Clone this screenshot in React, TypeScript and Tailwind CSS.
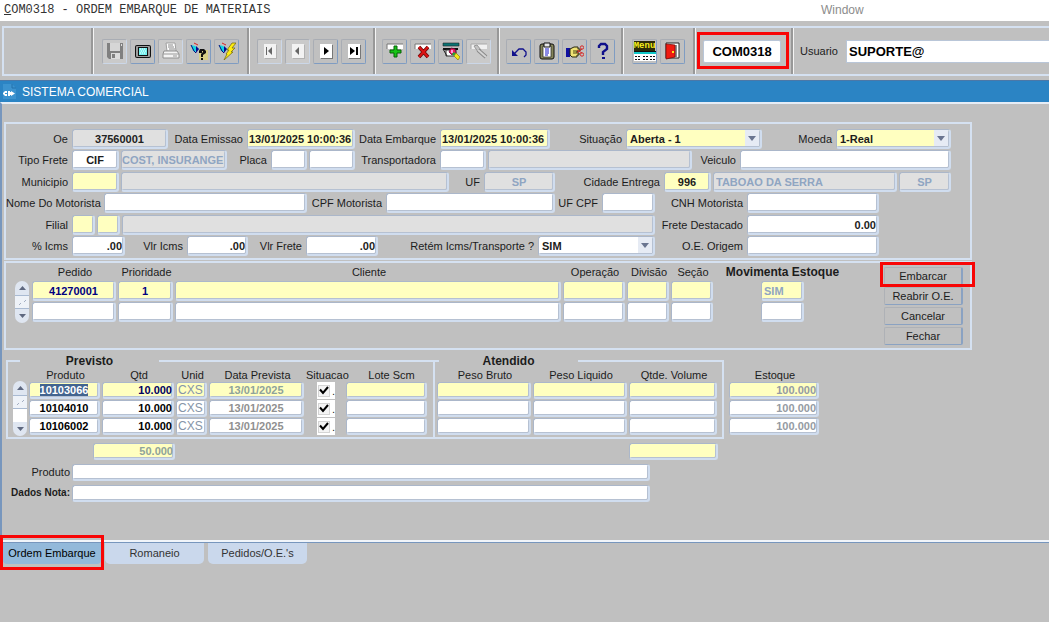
import React, { useEffect, useId, useRef } from "react";
import { clsx } from "clsx";

const fieldBase =
  "block h-5 min-w-0 rounded-[3px] border border-r-2 border-b-2 border-t-[#abb7ca] border-l-[#abb7ca] border-r-[#d0ddef] border-b-[#d0ddef] px-[3px] text-[11px] leading-4 font-bold outline-none shadow-[inset_-1px_-1px_0_0_#b6c1d2]";

type FieldProps = {
  label?: string;
  name?: string;
  labelClass?: string;
  className?: string;
  value?: string;
};

function Field({ label, name, labelClass, className, value = "" }: FieldProps) {
  const id = useId();
  return (
    <>
      {label && (
        <label
          htmlFor={id}
          className={clsx("shrink-0 pr-1 text-right text-[11px] leading-5 whitespace-nowrap", labelClass)}
        >
          {label}
        </label>
      )}
      <input id={id} aria-label={label ? undefined : name} defaultValue={value} className={clsx(fieldBase, className)} />
    </>
  );
}

function SelectField({ label, labelClass, className, boxClass, value }: FieldProps & { boxClass: string }) {
  const id = useId();
  return (
    <>
      <label
        htmlFor={id}
        className={clsx("shrink-0 pr-1 text-right text-[11px] leading-5 whitespace-nowrap", labelClass)}
      >
        {label}
      </label>
      <div className={clsx("relative", boxClass)}>
        <select id={id} defaultValue={value} className={clsx(fieldBase, "w-full appearance-none", className)}>
          <option>{value}</option>
        </select>
        <span className="pointer-events-none absolute top-px right-[3px] flex h-4 w-[14px] items-center justify-center bg-[#e6ebf4]">
          <svg width="8" height="5" viewBox="0 0 8 5" aria-hidden="true">
            <path d="M0 0h8L4 5z" fill="#6a7590" />
          </svg>
        </span>
      </div>
    </>
  );
}

function Cell({ name, value = "", className }: { name: string; value?: string; className?: string }) {
  return (
    <td className="p-0 pr-[2px] align-top">
      <input aria-label={name} defaultValue={value} className={clsx(fieldBase, "w-full", className)} />
    </td>
  );
}

function Scroller({ className, trackClass }: { className: string; trackClass: string }) {
  return (
    <div className={clsx("flex w-[14px] shrink-0 flex-col overflow-hidden rounded-full bg-[#dfe6f1]", className)}>
      <button type="button" aria-label="Registro anterior" className="flex h-[14px] shrink-0 items-center justify-center">
        <svg width="7" height="4" viewBox="0 0 7 4" aria-hidden="true">
          <path d="M0 4h7L3.500 0z" fill="#5e6880" />
        </svg>
      </button>
      <div className={clsx("flex-1", trackClass)}>
        <div className="flex h-[14px] items-center justify-center border-t border-b border-[#a9bad2] bg-[#eef2f8]">
          <svg width="9" height="7" viewBox="0 0 9 7" aria-hidden="true">
            <path d="M1 6l2-2M6 3l2-2" stroke="#a3aec2" />
          </svg>
        </div>
      </div>
      <button type="button" aria-label="Próximo registro" className="flex h-[14px] shrink-0 items-center justify-center">
        <svg width="7" height="4" viewBox="0 0 7 4" aria-hidden="true">
          <path d="M0 0h7L3.500 4z" fill="#5e6880" />
        </svg>
      </button>
    </div>
  );
}

const navTile = (
  <>
    <path d="M3 2h12v14H3z" fill="#fff" />
    <path d="M16 3v14H4v-1h11V3z" fill="#777" />
  </>
);
const navTileOff = (
  <>
    <path d="M3 2h12v14H3z" fill="#f2f2f2" />
    <path d="M16 3v14H4v-1h11V3z" fill="#b2b2b2" />
  </>
);
const flashlight = (
  <>
    <path d="M1 3l4 1 4 3-3 3-3-1z" fill="#12d4e4" />
    <path d="M6 4l3 3-3 4z" fill="#0b0b8c" />
    <path d="M1 3l3 6 2 2" stroke="#09097a" fill="none" />
    <path d="M4 1l4 2" stroke="#d22" />
  </>
);

const icons: Record<string, React.ReactNode> = {
  save: (
    <>
      <path d="M1 1h16v16H3l-2-2z" fill="#808080" />
      <path d="M4 1h10v8H4z" fill="#d6d6d6" />
      <path d="M5 11h9v6H5z" fill="#dcdcdc" />
      <path d="M6 12h3v4H6z" fill="#808080" />
      <path d="M15 2h1v2h-1z" fill="#ddd" />
    </>
  ),
  screen: (
    <>
      <rect x="1" y="3" width="16" height="13" rx="2" fill="#111" />
      <rect x="2" y="4" width="14" height="11" rx="1" fill="#9c9c9c" />
      <rect x="4" y="5" width="10" height="9" fill="#111" />
      <rect x="5" y="6" width="8" height="7" fill="#74f0ee" />
      <path d="M6 7h1M8 7h1M10 7h1M7 9h1M9 9h1M11 9h1M6 11h1M8 11h1M10 11h1" stroke="#fff" />
    </>
  ),
  print: (
    <>
      <path d="M4 1h9l1 8H5z" fill="#fff" stroke="#a0a0a0" />
      <path d="M6 3h5M6 5h6M7 7h6" stroke="#888" />
      <path d="M2 9h13l2 3v4H1v-4z" fill="#f4f4f4" stroke="#8f8f8f" />
      <path d="M1 12h16M11 14h4" stroke="#999" />
    </>
  ),
  queryEnter: (
    <>
      {flashlight}
      <path d="M9 8h9v10H9z" fill="#d6cf86" />
      <path d="M9 11V9l1-2h4l2 2v2l-3 2v2h-2v-3l2-2V9h-1v2zM11 16h2v2h-2z" fill="#111" />
    </>
  ),
  queryRun: (
    <>
      {flashlight}
      <path d="M14 1h4l-4 5h3l-4 4h2l-9 8 3-6H8l3-4H9l5-7z" fill="#ffee10" stroke="#7a6e10" strokeWidth=".8" />
    </>
  ),
  first: (
    <>
      {navTileOff}
      <path d="M5 5h1v8H5zM11 5v8L7 9z" fill="#666" />
    </>
  ),
  prev: (
    <>
      {navTileOff}
      <path d="M10 5v8L6 9z" fill="#666" />
    </>
  ),
  next: (
    <>
      {navTile}
      <path d="M7 5v8l5-4z" fill="#000" />
    </>
  ),
  last: (
    <>
      {navTile}
      <path d="M5 5v8l5-4zM11 5h2v8h-2z" fill="#000" />
    </>
  ),
  add: (
    <>
      <path d="M1 2h16v5H1z" fill="#fff" />
      <path d="M1 7V2h16" stroke="#777" fill="none" />
      <path d="M8 4h3v4h4v3h-4v4H8v-4H4V8h4z" fill="#16c416" stroke="#066006" />
    </>
  ),
  remove: (
    <>
      <path d="M1 2h16v5H1z" fill="#fff" />
      <path d="M1 7V2h16" stroke="#777" fill="none" />
      <path d="M5 5l9 10M14 5L5 15" stroke="#6c0808" strokeWidth="3.600" />
      <path d="M5 5l9 10M14 5L5 15" stroke="#dc1414" strokeWidth="2" />
    </>
  ),
  lock: (
    <>
      <path d="M1 1h16v3H1z" fill="#0b7474" stroke="#222" strokeWidth=".6" />
      <path d="M1 6h15v2H1z" fill="#111" />
      <path d="M4 8h10v6H4z" fill="#fff" stroke="#333" />
      <path d="M1 7l4 7" stroke="#222" />
      <path d="M9 6l4 1 1 4-4 2-3-3z" fill="#ef1660" stroke="#610e35" strokeWidth=".8" />
      <path d="M9 8h2v3H9z" fill="#ff9ad8" />
      <path d="M12 10l2 2-2 2-2-2z" fill="#1aa83a" />
      <path d="M14 11l4 4-2 3-4-4z" fill="#f4e51a" stroke="#8a8010" strokeWidth=".7" />
    </>
  ),
  key: (
    <>
      <path d="M1 2h16v5H1z" fill="#f0f0f0" />
      <path d="M1 7V2h16" stroke="#a8a8a8" fill="none" />
      <path d="M4 4l3-1 4 5-3 2z" fill="#c4c4c4" stroke="#989898" />
      <path d="M8 8l8 7" stroke="#888" strokeWidth="4" />
      <path d="M8 8l8 7" stroke="#d4d4d4" strokeWidth="2" />
    </>
  ),
  undo: (
    <>
      <path d="M4 12l5-5h4l3 3v3l-2 2" fill="none" stroke="#11118c" strokeWidth="1.300" />
      <path d="M2 8v6h6z" fill="#11118c" />
    </>
  ),
  clipboard: (
    <>
      <rect x="2" y="2" width="14" height="15" rx="2" fill="#85855a" stroke="#111" />
      <path d="M5 4h8v11H5z" fill="#fff" stroke="#222" strokeWidth=".7" />
      <path d="M6 1h6v4H6z" fill="#e8e8e8" stroke="#111" />
      <path d="M7 7h4M7 9h4M7 11h4M7 13h3" stroke="#1616c8" />
    </>
  ),
  hand: (
    <>
      <path d="M0 6h4v9H0z" fill="#1010a0" />
      <path d="M4 7l4-2h4v2h2v2h-3v2h2v2h-2v2H6l-2-2z" fill="#efe274" stroke="#29260c" />
      <path d="M7 9h4M7 11h4" stroke="#4b4512" />
      <path d="M11 8l5 3M11 11l5-4" stroke="#d62828" />
      <circle cx="16" cy="5.500" r="1.700" fill="none" stroke="#d62828" />
      <circle cx="16" cy="12.500" r="1.700" fill="none" stroke="#d62828" />
    </>
  ),
  help: (
    <>
      <path d="M5 6V4l2-2h4l2 2v3l-4 3v3" fill="none" stroke="#10108a" strokeWidth="2.400" />
      <path d="M8 15h3v2H8z" fill="#10108a" />
    </>
  ),
  exit: (
    <>
      <path d="M2 1h13v15H2z" fill="#fff" stroke="#222" />
      <path d="M11 3h2v12h-2z" fill="#8d8d8d" />
      <path d="M2 2l9 1v12l-9 2z" fill="#f01a10" stroke="#7b0b08" strokeWidth=".8" />
      <path d="M8 9h2v2H8z" fill="#ffe21a" />
    </>
  ),
};

function MenuGlyph() {
  return (
    <span className="flex flex-col items-center">
      <span className="bg-[#2b2b08] font-['Liberation_Mono',monospace] text-[9px] leading-[10px] font-bold text-[#f6ee1c]">
        Menu
      </span>
      <svg width="22" height="10" viewBox="0 0 22 10" shapeRendering="crispEdges" aria-hidden="true">
        <path d="M0 0h22v1H0z" fill="#111" />
        <path d="M0 1h22v2H0z" fill="#10c8c8" />
        <path d="M0 3h22v7H0z" fill="#fff" />
        <path d="M1 5h6M9 5h5M16 5h5M1 8h6M9 8h5M16 8h5" stroke="#111" strokeWidth="1" strokeDasharray="2 1" />
      </svg>
    </span>
  );
}

type Tool = [icon: string, title: string, off?: boolean];

function ToolGroup({ tools, className }: { tools: Tool[]; className: string }) {
  return (
    <div
      className={clsx(
        "flex shrink-0 items-center gap-[3px] border-r-2 border-l border-l-[#f4f4f4] border-r-[#989898]",
        className,
      )}
    >
      {tools.map(([icon, title, off]) => (
        <button
          key={icon}
          type="button"
          aria-label={title}
          className={clsx(
            "flex h-[25px] w-[25px] items-center justify-center rounded-[2px] border border-t-[#a9adb4] border-l-[#a9adb4]",
            off ? "border-r-[#cbd7e8] border-b-[#cbd7e8] bg-[#cacaca]" : "border-r-[#7f9cc2] border-b-[#7f9cc2]",
          )}
        >
          {icon === "menu" ? (
            <MenuGlyph />
          ) : (
            <svg width="18" height="18" viewBox="0 0 18 18" aria-hidden="true">
              {icons[icon]}
            </svg>
          )}
        </button>
      ))}
    </div>
  );
}

const yellow = "bg-[#ffffc0]";
const white = "bg-white";
const gray = "bg-[#e0e0e0]";
const muted = "text-[#8fa5c2]";

const products = ["10103066", "10104010", "10106002"];
const panel = "border-2 border-[#d5e1f1]";
const smallField = "h-[17px]! leading-[14px]!";

export default function App() {
  const selected = useRef<HTMLInputElement>(null);
  useEffect(() => {
    selected.current?.focus();
    selected.current?.select();
  }, []);

  return (
    <div className="min-h-screen overflow-hidden bg-[#c0c0c0] font-['Liberation_Sans',Arial,sans-serif] text-[11px] text-[#1c1c1c]">
      <header className="flex h-[21px] items-center bg-white pl-1">
        <h1 className="w-[817px] pb-[2px] font-['Liberation_Mono',monospace] text-[12px] leading-4 text-[#333]">
          <u>C</u>OM0318 - ORDEM EMBARQUE DE MATERIAIS
        </h1>
        <button type="button" className="pb-[2px] text-[12px] leading-4 text-[#8c8c8c]">
          Window
        </button>
      </header>

      <div className="pt-[5px] pb-1 pl-[2px]">
        <div className="flex h-[50px] border-2 border-r-0 border-[#d5e1f1]">
          <div className="w-[89px] shrink-0 border-r-2 border-[#989898]" />
          <ToolGroup
            className="px-2"
            tools={[
              ["save", "Salvar", true],
              ["screen", "Tela"],
              ["print", "Imprimir", true],
              ["queryEnter", "Entrar consulta"],
              ["queryRun", "Executar consulta"],
            ]}
          />
          <ToolGroup
            className="px-[7px]"
            tools={[
              ["first", "Primeiro", true],
              ["prev", "Anterior", true],
              ["next", "Próximo"],
              ["last", "Último"],
            ]}
          />
          <ToolGroup
            className="px-[6px]"
            tools={[
              ["add", "Inserir registro"],
              ["remove", "Remover registro"],
              ["lock", "Bloquear registro"],
              ["key", "Limpar registro", true],
            ]}
          />
          <ToolGroup
            className="px-[6px]"
            tools={[
              ["undo", "Desfazer"],
              ["clipboard", "Colar"],
              ["hand", "Recortar"],
              ["help", "Ajuda"],
            ]}
          />
          <ToolGroup
            className="px-2"
            tools={[
              ["menu", "Menu"],
              ["exit", "Sair"],
            ]}
          />
          <div className="flex w-[98px] shrink-0 items-center border-r-2 border-l border-r-[#989898] border-l-[#f4f4f4] pl-[7px]">
            <div className="relative w-[78px]">
              <input
                aria-label="Programa"
                defaultValue="COM0318"
                className="block h-[23px] w-full rounded-[2px] border border-[#b9c6d8] bg-white text-center text-[13px] leading-5 font-bold text-black outline-none"
              />
              <span className="pointer-events-none absolute -top-2 -right-2 -bottom-[6px] -left-[6px] border-[3px] border-[#f80505]" />
            </div>
          </div>
          <div className="flex min-w-0 flex-1 items-center border-l border-[#f4f4f4] pl-[6px]">
            <label htmlFor="usuario" className="w-[46px] shrink-0 text-[11px] leading-5">
              Usuario
            </label>
            <input
              id="usuario"
              defaultValue="SUPORTE@"
              className="block h-[23px] min-w-0 flex-1 border border-r-0 border-[#b9c6d8] bg-white px-[2px] text-[13px] leading-5 font-bold text-black outline-none"
            />
          </div>
        </div>
      </div>

      <div className="flex h-[22px] items-center gap-[6px] border-t border-[#4b78a8] bg-[#2b84c4] pl-[3px] text-white">
        <svg width="13" height="15" viewBox="0 0 13 15" aria-hidden="true">
          <path d="M0 0h9l4 4v11H0z" fill="#3c93cf" />
          <path d="M9 0v4h4" fill="none" stroke="#2370ab" />
          <path d="M4 7H2L0 9v1l2 2h2v-2H2V9h2zM5 7h2v1h1V7l4 2.500L8 12v-1H7v1H5z" fill="#fff" />
        </svg>
        <h2 className="text-[12px] leading-5">SISTEMA COMERCIAL</h2>
      </div>

      <main className="border-t-2 border-b-2 border-l-2 border-t-[#e6edf6] border-b-[#f1f5fa] border-l-[#7796bd] pt-[18px] pb-[38px] pl-[2px]">
        <section className={clsx(panel, "flex w-full max-w-[968px] flex-col gap-px pt-[5px] pr-[19px] pb-px")}>
          <div>
            <div className="flex h-[21px]">
              <Field label="Oe" labelClass="w-[66px]" className={clsx(gray, "w-24 text-center text-[#222]")} value="37560001" />
              <Field label="Data Emissao" labelClass="w-[79px]" className={clsx(yellow, "w-[108px] px-px!")} value="13/01/2025 10:00:36" />
              <Field label="Data Embarque" labelClass="w-[85px]" className={clsx(yellow, "w-[110px] px-px!")} value="13/01/2025 10:00:36" />
              <SelectField label="Situação" labelClass="w-[76px]" boxClass="flex-1" className={yellow} value="Aberta - 1" />
              <SelectField label="Moeda" labelClass="w-[74px]" boxClass="w-[115px]" className={yellow} value="1-Real" />
            </div>
            <div className="flex h-[21px]">
              <Field label="Tipo Frete" labelClass="w-[66px]" className={clsx(white, "mr-[2px] w-[47px] text-center")} value="CIF" />
              <Field name="Descrição do frete" className={clsx(gray, muted, "w-[106px] px-0!")} value="COST, INSURANGE" />
              <Field label="Placa" labelClass="w-11" className={clsx(white, "mr-[2px] w-9")} />
              <Field name="Placa número" className={clsx(white, "w-[46px]")} />
              <Field label="Transportadora" labelClass="w-[85px]" className={clsx(white, "mr-[2px] w-[46px]")} />
              <Field name="Nome da transportadora" className={clsx(gray, "w-[204px]")} />
              <Field label="Veiculo" labelClass="w-12" className={clsx(white, "flex-1")} />
            </div>
          </div>
          <div>
            <div className="flex h-[21px]">
              <Field label="Municipio" labelClass="w-[66px]" className={clsx(yellow, "mr-[2px] w-[47px]")} />
              <Field name="Nome do municipio" className={clsx(gray, "flex-1")} />
              <Field label="UF" labelClass="w-[35px]" className={clsx(gray, muted, "w-[71px] text-center")} value="SP" />
              <Field label="Cidade Entrega" labelClass="w-[109px]" className={clsx(yellow, "mr-[2px] w-[47px] text-center")} value="996" />
              <Field name="Nome da cidade" className={clsx(gray, muted, "mr-[2px] w-[184px] px-[2px]!")} value="TABOAO DA SERRA" />
              <Field name="UF entrega" className={clsx(gray, muted, "w-[52px] text-center")} value="SP" />
            </div>
            <div className="flex h-[21px] pr-[72px]">
              <Field label="Nome Do Motorista" labelClass="w-[98px]" className={clsx(white, "w-[203px]")} />
              <Field label="CPF Motorista" labelClass="w-[79px]" className={clsx(white, "flex-1")} />
              <Field label="UF CPF" labelClass="w-[47px]" className={clsx(white, "w-[53px]")} />
              <Field label="CNH Motorista" labelClass="w-[92px]" className={clsx(white, "w-[132px]")} />
            </div>
          </div>
          <div>
            <div className="flex h-[21px] pr-[72px]">
              <Field label="Filial" labelClass="w-[66px]" className={clsx(yellow, "mr-[2px] w-[23px]")} />
              <Field name="Filial código" className={clsx(yellow, "mr-[2px] w-[23px]")} />
              <Field name="Nome da filial" className={clsx(gray, "flex-1")} />
              <Field label="Frete Destacado" labelClass="w-[92px]" className={clsx(white, "w-[132px] px-px! text-right")} value="0.00" />
            </div>
            <div className="flex h-[21px] pr-[72px]">
              <Field label="% Icms" labelClass="w-[66px]" className={clsx(white, "w-[53px] px-px! text-right")} value=".00" />
              <Field label="Vlr Icms" labelClass="w-[62px]" className={clsx(white, "w-[61px] px-px! text-right")} value=".00" />
              <Field label="Vlr Frete" labelClass="w-[58px]" className={clsx(white, "w-[72px] px-px! text-right")} value=".00" />
              <SelectField label="Retém Icms/Transporte ?" labelClass="w-40" boxClass="flex-1" className={white} value="SIM" />
              <Field label="O.E. Origem" labelClass="w-[92px]" className={clsx(white, "w-[132px]")} />
            </div>
          </div>
        </section>

        <section className={clsx(panel, "mt-px flex h-[89px] w-full max-w-[968px] items-start pr-[7px] pl-[9px]")}>
          <Scroller className="mt-[18px] mr-[3px] h-[42px]" trackClass="bg-[#dfe6f1]" />
          <table className="min-w-0 flex-1 table-fixed border-collapse">
            <colgroup>
              <col className="w-[86px]" />
              <col className="w-[57px]" />
              <col className="w-[388px]" />
              <col className="w-16" />
              <col className="w-11" />
              <col className="w-11" />
              <col className="w-[135px]" />
            </colgroup>
            <thead>
              <tr className="h-[18px] leading-4">
                <th className="p-0 font-normal">Pedido</th>
                <th className="p-0 font-normal">Prioridade</th>
                <th className="p-0 font-normal">Cliente</th>
                <th className="p-0 font-normal">Operação</th>
                <th className="p-0 font-normal">Divisão</th>
                <th className="p-0 font-normal">Seção</th>
                <th className="p-0 text-[12px] font-bold">Movimenta Estoque</th>
              </tr>
            </thead>
            <tbody>
              {[0, 1].map((row) => {
                const tone = row === 0 ? yellow : white;
                return (
                  <tr key={row} className="h-[21px]">
                    <Cell name="Pedido" value={row === 0 ? "41270001" : ""} className={clsx(tone, "text-center text-[#000080]")} />
                    <Cell name="Prioridade" value={row === 0 ? "1" : ""} className={clsx(tone, "text-center text-[#000080]")} />
                    <Cell name="Cliente" className={tone} />
                    <Cell name="Operação" className={tone} />
                    <Cell name="Divisão" className={tone} />
                    <Cell name="Seção" className={tone} />
                    <td className="p-0 align-top">
                      <input
                        aria-label="Movimenta Estoque"
                        defaultValue={row === 0 ? "SIM" : ""}
                        className={clsx(fieldBase, tone, muted, "mx-auto w-[43px] px-[2px]!")}
                      />
                    </td>
                  </tr>
                );
              })}
            </tbody>
          </table>
          <div className="ml-[34px] flex w-[79px] shrink-0 flex-col gap-[2px] pt-1">
            {["Embarcar", "Reabrir O.E.", "Cancelar", "Fechar"].map((text) => (
              <div key={text} className="relative">
                <button
                  type="button"
                  className="block h-[18px] w-full rounded-[2px] border border-r-2 border-t-[#aeb1b6] border-r-[#8aa2c2] border-b-[#8aa2c2] border-l-[#aeb1b6] text-center text-[11px] leading-4"
                >
                  {text}
                </button>
                {text === "Embarcar" && (
                  <span className="pointer-events-none absolute -top-[5px] -right-[12px] -bottom-[2px] -left-1 border-[3px] border-[#f80505]" />
                )}
              </div>
            ))}
          </div>
        </section>

        <section className="mt-1 flex items-start pl-[2px]">
          <fieldset className="w-[427px] min-w-0 shrink-0 border-2 border-r-0 border-[#d5e1f1] pb-px">
            <legend className="ml-3 w-[139px] p-0">
              <span className="block text-center text-[12px] leading-[14px] font-bold">Previsto</span>
            </legend>
            <div className="flex pl-[5px]">
              <Scroller className="mt-[13px] mr-[2px] h-[55px]" trackClass="bg-white" />
              <table className="w-[400px] table-fixed border-collapse">
                <colgroup>
                  <col className="w-[73px]" />
                  <col className="w-[74px]" />
                  <col className="w-[33px]" />
                  <col className="w-[97px]" />
                  <col className="w-10" />
                  <col className="w-[83px]" />
                </colgroup>
                <thead>
                  <tr className="h-[14px] leading-[13px] whitespace-nowrap">
                    <th className="p-0 font-normal">Produto</th>
                    <th className="p-0 font-normal">Qtd</th>
                    <th className="p-0 font-normal">Unid</th>
                    <th className="p-0 font-normal">Data Prevista</th>
                    <th className="p-0 font-normal">Situacao</th>
                    <th className="p-0 pl-2 font-normal">Lote Scm</th>
                  </tr>
                </thead>
                <tbody>
                  {products.map((code, row) => {
                    const tone = row === 0 ? yellow : white;
                    return (
                      <tr key={code} className="h-[18px]">
                        <td className="p-0 pr-[2px] align-top">
                          <input
                            ref={row === 0 ? selected : undefined}
                            aria-label="Produto"
                            defaultValue={code}
                            className={clsx(
                              fieldBase,
                              smallField,
                              tone,
                              "w-full text-center text-black selection:bg-[#42648f] selection:text-white",
                            )}
                          />
                        </td>
                        <Cell
                          name="Qtd"
                          value="10.000"
                          className={clsx(smallField, tone, "px-0! text-right", row === 0 ? "text-[#000060]" : "text-black")}
                        />
                        <Cell
                          name="Unid"
                          value="CXS"
                          className={clsx(smallField, tone, "px-px! text-[12px]! font-normal! text-[#8695a8]")}
                        />
                        <Cell
                          name="Data Prevista"
                          value="13/01/2025"
                          className={clsx(smallField, tone, "text-center", row === 0 ? "text-[#8fa39a]" : "text-[#909090]")}
                        />
                        <td className="p-0 align-top">
                          <label className={clsx("relative mx-auto flex h-[17px] w-[18px] items-center gap-[2px] pl-px", white)}>
                            <input
                              type="checkbox"
                              aria-label="Situacao"
                              defaultChecked
                              className="peer h-3 w-3 appearance-none border border-[#d4d4d4] bg-[#f4f4f4]"
                            />
                            <svg
                              width="10"
                              height="9"
                              viewBox="0 0 10 9"
                              aria-hidden="true"
                              className="pointer-events-none absolute left-[2px] hidden peer-checked:block"
                            >
                              <path d="M1 3.500L4 7l5-6" fill="none" stroke="#000" strokeWidth="2" />
                            </svg>
                            <span className="leading-3">.</span>
                          </label>
                        </td>
                        <Cell name="Lote Scm" className={clsx(smallField, tone)} />
                      </tr>
                    );
                  })}
                </tbody>
              </table>
            </div>
          </fieldset>
          <fieldset className="w-[291px] min-w-0 shrink-0 border-2 border-[#d5e1f1] pb-px">
            <legend className="ml-1 w-[139px] p-0">
              <span className="block text-center text-[12px] leading-[14px] font-bold">Atendido</span>
            </legend>
            <div className="pl-[2px]">
              <table className="w-[282px] table-fixed border-separate border-spacing-0">
                <colgroup>
                  <col className="w-24" />
                  <col className="w-24" />
                  <col className="w-[90px]" />
                </colgroup>
                <thead>
                  <tr className="h-[14px] leading-[14px] whitespace-nowrap">
                    <th className="p-0 font-normal">Peso Bruto</th>
                    <th className="p-0 font-normal">Peso Liquido</th>
                    <th className="p-0 font-normal">Qtde. Volume</th>
                  </tr>
                </thead>
                <tbody>
                  {products.map((code, row) => {
                    const tone = row === 0 ? yellow : white;
                    return (
                      <tr key={code} className="h-[18px]">
                        <Cell name="Peso Bruto" className={clsx(smallField, tone)} />
                        <Cell name="Peso Liquido" className={clsx(smallField, tone)} />
                        <Cell name="Qtde. Volume" className={clsx(smallField, tone)} />
                      </tr>
                    );
                  })}
                </tbody>
              </table>
            </div>
          </fieldset>
          <table className="mt-[14px] ml-[5px] w-[92px] table-fixed border-collapse">
            <thead>
              <tr className="h-[14px] leading-[14px]">
                <th className="p-0 font-normal">Estoque</th>
              </tr>
            </thead>
            <tbody>
              {products.map((code, row) => (
                <tr key={code} className="h-[18px]">
                  <Cell
                    name="Estoque"
                    value="100.000"
                    className={clsx(smallField, row === 0 ? yellow : white, "px-px! text-right text-[#959ba3]")}
                  />
                </tr>
              ))}
            </tbody>
          </table>
        </section>

        <div className="mt-1 flex w-[714px] justify-between pl-[89px]">
          <Field name="Total Qtd" className={clsx(smallField, yellow, "w-[82px] px-0! text-right text-[#8fa39a]")} value="50.000" />
          <Field name="Total Volume" className={clsx(smallField, yellow, "w-[89px]")} />
        </div>
        <div className="mt-1 flex w-[646px]">
          <Field label="Produto" labelClass="w-[68px] pr-[2px]! leading-4!" className={clsx(smallField, white, "flex-1")} />
        </div>
        <div className="mt-1 flex w-[646px]">
          <Field label="Dados Nota:" labelClass="w-[68px] pr-[2px]! text-[10px]! leading-4! font-bold" className={clsx(smallField, white, "flex-1")} />
        </div>
      </main>

      <nav className="flex gap-1 border-t border-[#7796bd] pl-[3px] text-[11px] leading-[21px] text-[#333]">
        <div className="relative w-[98px]">
          <button type="button" className="block w-full rounded-b-[4px] bg-[#93b9da] text-center whitespace-nowrap text-black">
            Ordem Embarque
          </button>
          <span className="pointer-events-none absolute -top-2 -right-[3px] -bottom-[6px] -left-[3px] border-[3px] border-[#f80505]" />
        </div>
        <button type="button" className="w-[99px] rounded-b-[5px] bg-[#cad8ec] text-center">
          Romaneio
        </button>
        <button type="button" className="w-[99px] rounded-b-[5px] bg-[#cad8ec] text-center">
          Pedidos/O.E.&apos;s
        </button>
      </nav>
    </div>
  );
}
